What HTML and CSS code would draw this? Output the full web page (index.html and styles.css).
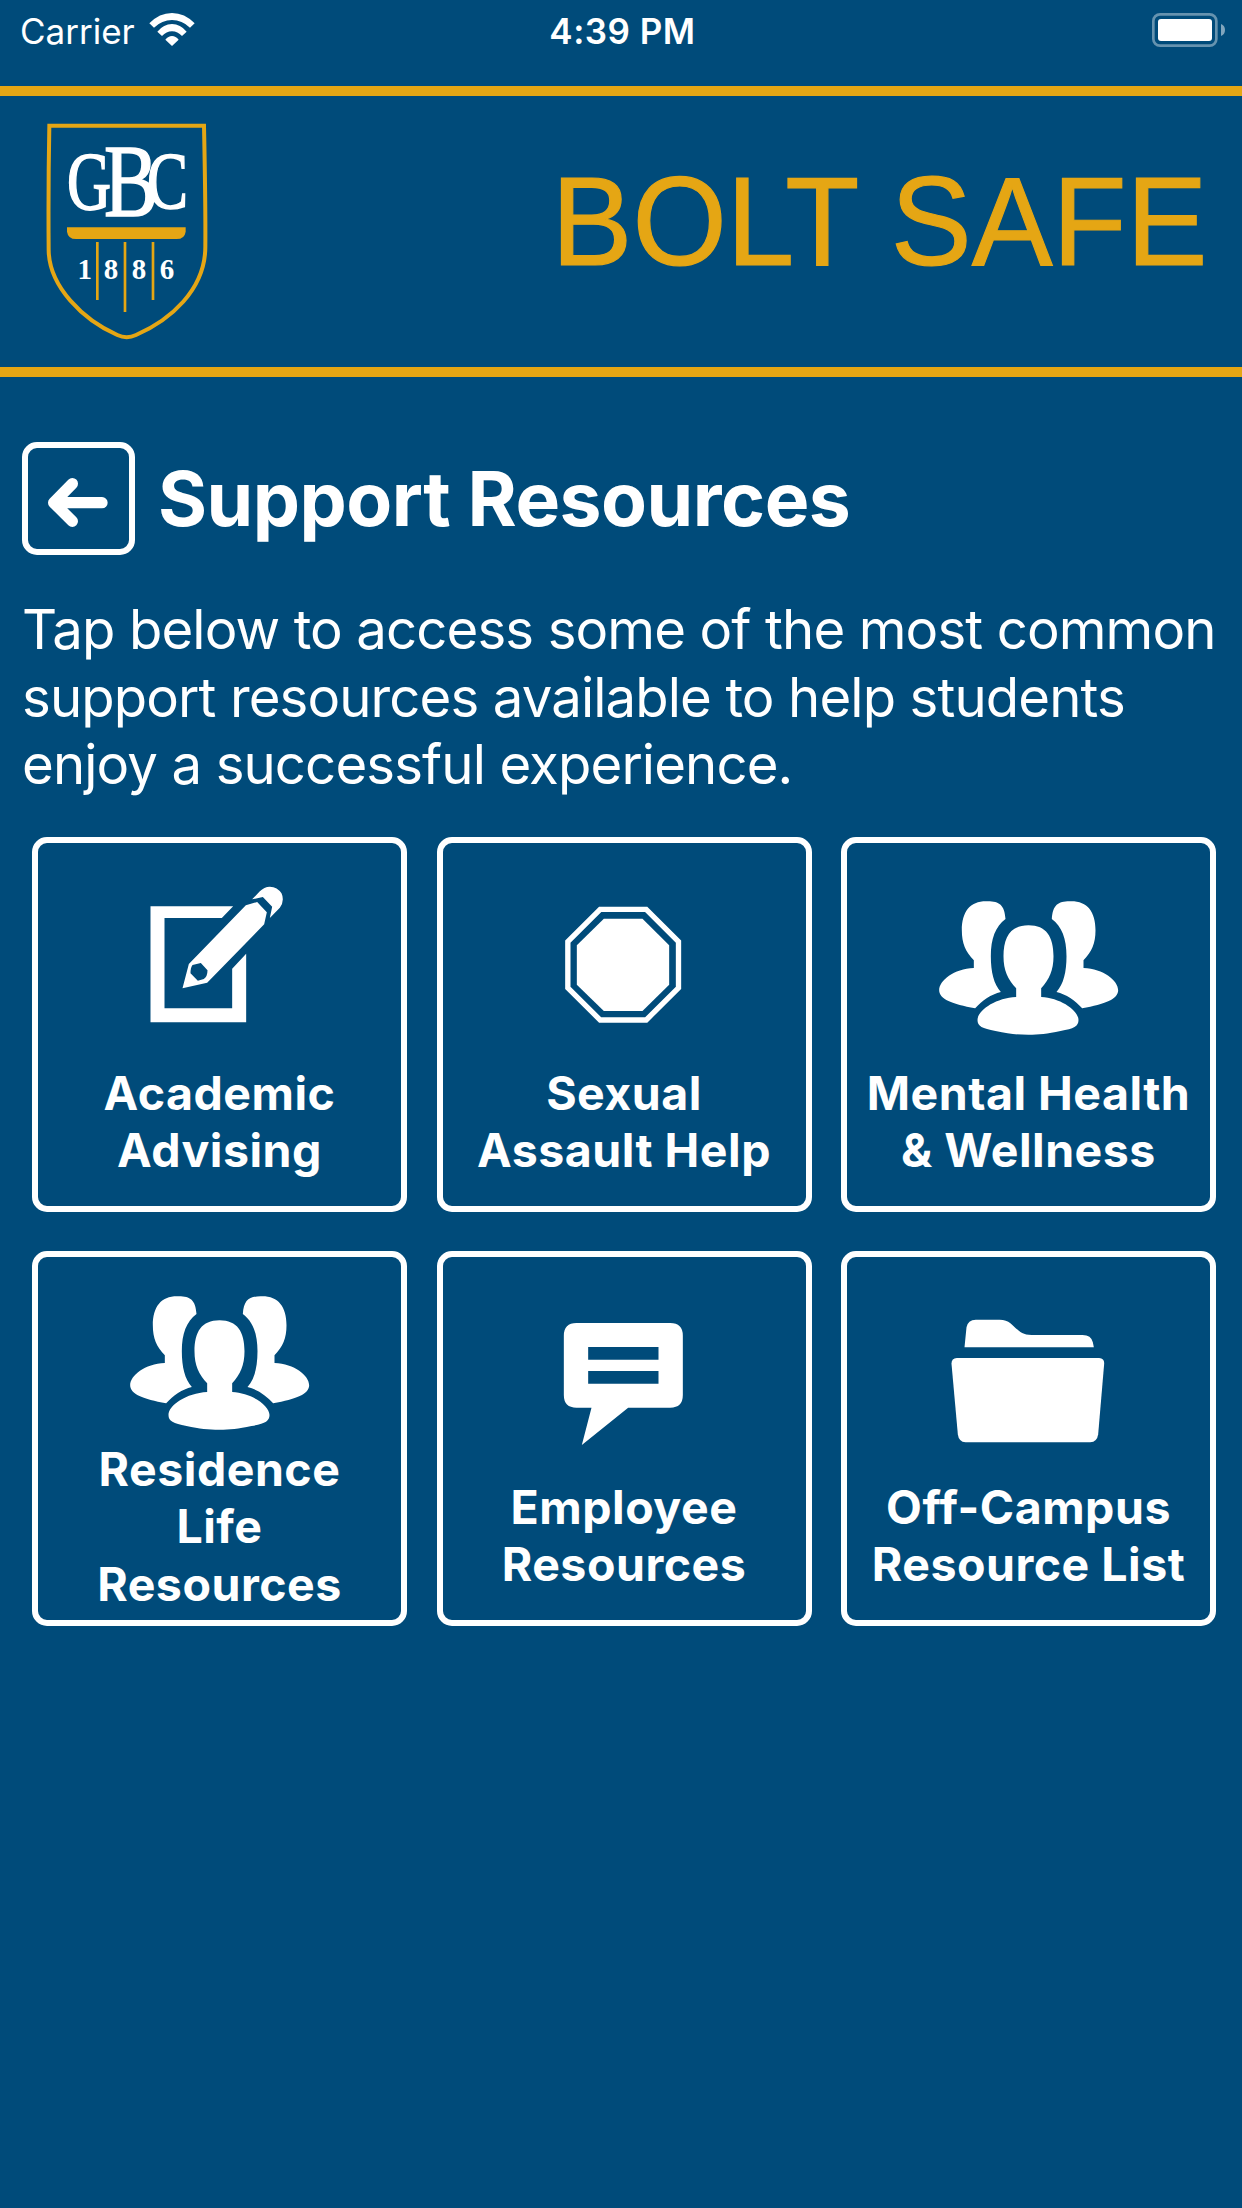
FILE: index.html
```
<!DOCTYPE html>
<html lang="en">

<head>
  <meta charset="utf-8">
  <title>Bolt Safe - Support Resources</title>
  <link rel="stylesheet" href="styles.css">
</head>

<body>
  <div class="status-bar">
    <div class="carrier">
      <span>Carrier</span>
      <svg class="wifi" viewBox="0 0 138 99">
        <path d="M1 31 Q31 0 69 0 Q107 0 137 31 L123 44 Q99 21 69 21 Q39 21 15 44Z"/>
        <path d="M25 56 Q44 33 69 33 Q94 33 113 56 L99 69 Q86 55 69 55 Q52 55 39 69Z"/>
        <path d="M49 80 Q58 69 69 69 Q80 69 89 80 L69 99Z"/>
      </svg>
    </div>
    <div class="time">4:39 PM</div>
    <svg class="battery" viewBox="0 0 219 102">
      <rect class="battery-case" x="4" y="4" width="189" height="94" rx="20"/>
      <rect x="18" y="18" width="162" height="66" rx="9"/>
      <path class="battery-tip" d="M207 33 Q219 38 219 51 Q219 64 207 69Z"/>
    </svg>
  </div>

  <div class="banner">
    <svg class="shield" viewBox="45 33 495 660">
      <path class="shield-line" d="M58 47 H522 C524 150 527 280 526 410 C526 540 420 630 318 675 Q290 688 262 675 C160 630 57 530 56 420 C55 300 56 150 58 47Z"/>
      <g class="shield-letters">
        <text x="111" y="297" font-size="246" textLength="132" lengthAdjust="spacingAndGlyphs">G</text>
        <text x="222" y="318" font-size="313" textLength="162" lengthAdjust="spacingAndGlyphs">B</text>
        <text x="351" y="293" font-size="244" textLength="123" lengthAdjust="spacingAndGlyphs">C</text>
      </g>
      <path class="gold" d="M111 352 H467 V365 Q464 387 440 387 H138 Q114 387 111 365Z"/>
      <path class="gold" d="M198 396h8v174h-8z M281 396h8v210h-8z M365 396h8v174h-8z"/>
      <g class="shield-year">
        <text x="164" y="508">1</text>
        <text x="243" y="508">8</text>
        <text x="327" y="508">8</text>
        <text x="411" y="508">6</text>
      </g>
    </svg>
    <svg class="app-name" viewBox="0 0 670 160">
      <text x="5.5" y="122.3" textLength="656" lengthAdjust="spacingAndGlyphs">BOLT SAFE</text>
    </svg>
  </div>

  <div class="container">
    <div class="title-row">
      <a class="back-btn" href="#">
        <svg viewBox="54 54 303 303">
          <path d="M187 161 L131 218 L187 274 M131 218 H276"/>
        </svg>
      </a>
      <h1>Support Resources</h1>
    </div>
    <p class="intro">Tap below to access some of the most common<br>support resources available to help students<br>enjoy a successful experience.</p>

    <div class="grid">
      <a class="card" href="#">
        <svg class="icon" viewBox="268.5 150 600 450">
          <path d="M608 229 H360 V577 H647 V371 L605 416 V535 H402 V264 H574Z"/>
          <path fill-rule="evenodd" d="M456 475 L475 402 L646 226 L680 216 L709 247 L701 283 L530 458Z M486 405 L511 399 L531 421 Q531 440 520 447 L502 452 L480 430 Q480 412 486 405Z"/>
          <path d="M665 208 L688 184 Q701 170 718 170 Q741 171 753 190 Q763 212 748 233 L718 264 L725 230 L697 201Z"/>
        </svg>
        <span class="label">Academic<br>Advising</span>
      </a>
      <a class="card" href="#">
        <svg class="icon" viewBox="282.5 149 600 450">
          <path class="octagon-line" d="M511 237 H649 L746 334 V473 L649 569 H511 L414 473 V334Z"/>
          <path d="M522 265 H638 L718 345 V463 L638 542 H522 L441 463 V345Z"/>
        </svg>
        <span class="label">Sexual<br>Assault Help</span>
      </a>
      <a class="card" href="#">
        <svg class="icon" viewBox="295.5 149 600 450">
          <g id="users">
            <path d="M594 285 C648 285 669 320 669 378 C669 420 656 448 632 474 V500 C690 503 744 540 744 569 C744 588 730 595 690 602 C650 611 625 613 594 613 C560 613 535 611 495 602 C455 594 441 588 441 569 C441 540 495 503 557 500 V474 C532 448 519 420 519 378 C519 320 540 285 594 285Z"/>
            <path id="user-side" d="M467 213 C505 212 522 222 525 266 C495 288 481 325 481 378 C481 425 490 462 511 485 C482 492 455 510 434 534 C365 522 326 506 326 480 C326 450 370 416 430 413 V390 C405 364 394 340 394 300 C394 245 418 213 467 213Z"/>
            <use href="#user-side" transform="translate(1189 0) scale(-1 1)"/>
          </g>
        </svg>
        <span class="label">Mental Health<br>&amp; Wellness</span>
      </a>
      <a class="card card-tall" href="#">
        <svg class="icon" viewBox="295.5 149 600 450">
          <use href="#users"/>
        </svg>
        <span class="label">Residence<br>Life<br>Resources</span>
      </a>
      <a class="card" href="#">
        <svg class="icon" viewBox="282.5 162 600 450">
          <path fill-rule="evenodd" d="M440 249 H721 Q759 249 759 287 V465 Q759 503 721 503 H595 L456 615 L485 503 H440 Q402 503 402 465 V287 Q402 249 440 249Z M475 321 V359 H686 V321Z M475 393 V431 H686 V393Z"/>
        </svg>
        <span class="label">Employee<br>Resources</span>
      </a>
      <a class="card" href="#">
        <svg class="icon" viewBox="296.5 162 600 450">
          <path d="M403 322 L409 262 Q413 239 437 239 H508 C555 239 553 285 604 285 H757 Q783 285 788 307 L791 322Z"/>
          <path d="M380 354 H807 Q823 355 822 371 L804 583 Q801 606 780 607 H406 Q386 606 383 583 L364 371 Q364 355 380 354Z"/>
        </svg>
        <span class="label">Off-Campus<br>Resource List</span>
      </a>
    </div>
  </div>
</body>

</html>
```
FILE: styles.css
```
* {
  box-sizing: border-box;
}

body {
  margin: 0;
  min-height: 2208px;
  background-color: #004b7a;
  color: #fff;
  font-family: Inter, "Liberation Sans", sans-serif;
}

svg {
  display: block;
  fill: #fff;
}

a {
  color: inherit;
  text-decoration: none;
}

/* Status bar */
.status-bar {
  display: grid;
  grid-template-columns: 1fr auto 1fr;
  align-items: center;
  height: 86px;
  padding: 0 17px 24px 20px;
  font-size: 35px;
}

.carrier {
  display: flex;
  align-items: center;
  gap: 14px;
}

.wifi {
  width: 46px;
  height: 33px;
  margin-top: -3px;
}

.time {
  font-weight: 600;
  letter-spacing: 0.5px;
}

.battery {
  width: 73px;
  height: 34px;
  justify-self: end;
  margin-top: -2px;
}

.battery-case {
  fill: none;
  stroke: rgba(255, 255, 255, 0.4);
  stroke-width: 8;
}

.battery-tip {
  fill: rgba(255, 255, 255, 0.5);
}

/* Banner */
.banner {
  display: flex;
  justify-content: space-between;
  align-items: flex-start;
  height: 291px;
  padding: 25px 26px 0 45px;
  border-top: 10px solid #e5a614;
  border-bottom: 10px solid #e5a614;
}

.shield {
  width: 165px;
  height: 220px;
}

.shield-line {
  fill: none;
  stroke: #e5a614;
  stroke-width: 12;
}

.gold {
  fill: #e5a614;
}

.shield-letters {
  font-family: "Liberation Serif", serif;
  stroke: #fff;
  stroke-width: 5;
}

.shield-year {
  font-family: "Liberation Serif", serif;
  font-size: 87px;
  font-weight: bold;
  text-anchor: middle;
}

.app-name {
  width: 670px;
  height: 160px;
  margin-top: 22px;
  fill: #e5a614;
  stroke: #e5a614;
  stroke-width: 1.2px;
  font-family: "Liberation Sans", Arial, sans-serif;
  font-size: 127px;
}

/* Content */
.container {
  padding: 65px 22px 0;
}

.title-row {
  display: flex;
  align-items: center;
  gap: 23px;
}

.back-btn {
  width: 113px;
  height: 113px;
  border: 6px solid #fff;
  border-radius: 15px;
}

.back-btn svg {
  width: 101px;
  height: 101px;
  fill: none;
  stroke: #fff;
  stroke-width: 34;
  stroke-linecap: round;
  stroke-linejoin: round;
}

h1 {
  margin: 0;
  font-size: 75px;
  font-weight: 700;
  line-height: 90px;
  letter-spacing: -0.5px;
}

.intro {
  margin: 41px 0 38px;
  font-size: 54.5px;
  line-height: 67.67px;
  letter-spacing: -0.88px;
  white-space: nowrap;
}

.grid {
  display: grid;
  grid-template-columns: repeat(3, 375px);
  gap: 39px 29.5px;
  margin-left: 10px;
}

.card {
  display: flex;
  flex-direction: column;
  align-items: center;
  gap: 35px;
  height: 375px;
  padding-top: 37px;
  border: 6px solid #fff;
  border-radius: 15px;
}

/* three lines of label */
.card-tall {
  gap: 16px;
  padding-top: 18px;
}

.icon {
  width: 200px;
  height: 150px;
  flex-shrink: 0;
  overflow: visible;
}

.octagon-line {
  fill: none;
  stroke: #fff;
  stroke-width: 16;
}

.label {
  font-size: 46.5px;
  font-weight: 700;
  line-height: 57.3px;
  letter-spacing: 0.5px;
  text-align: center;
  white-space: nowrap;
}
```
